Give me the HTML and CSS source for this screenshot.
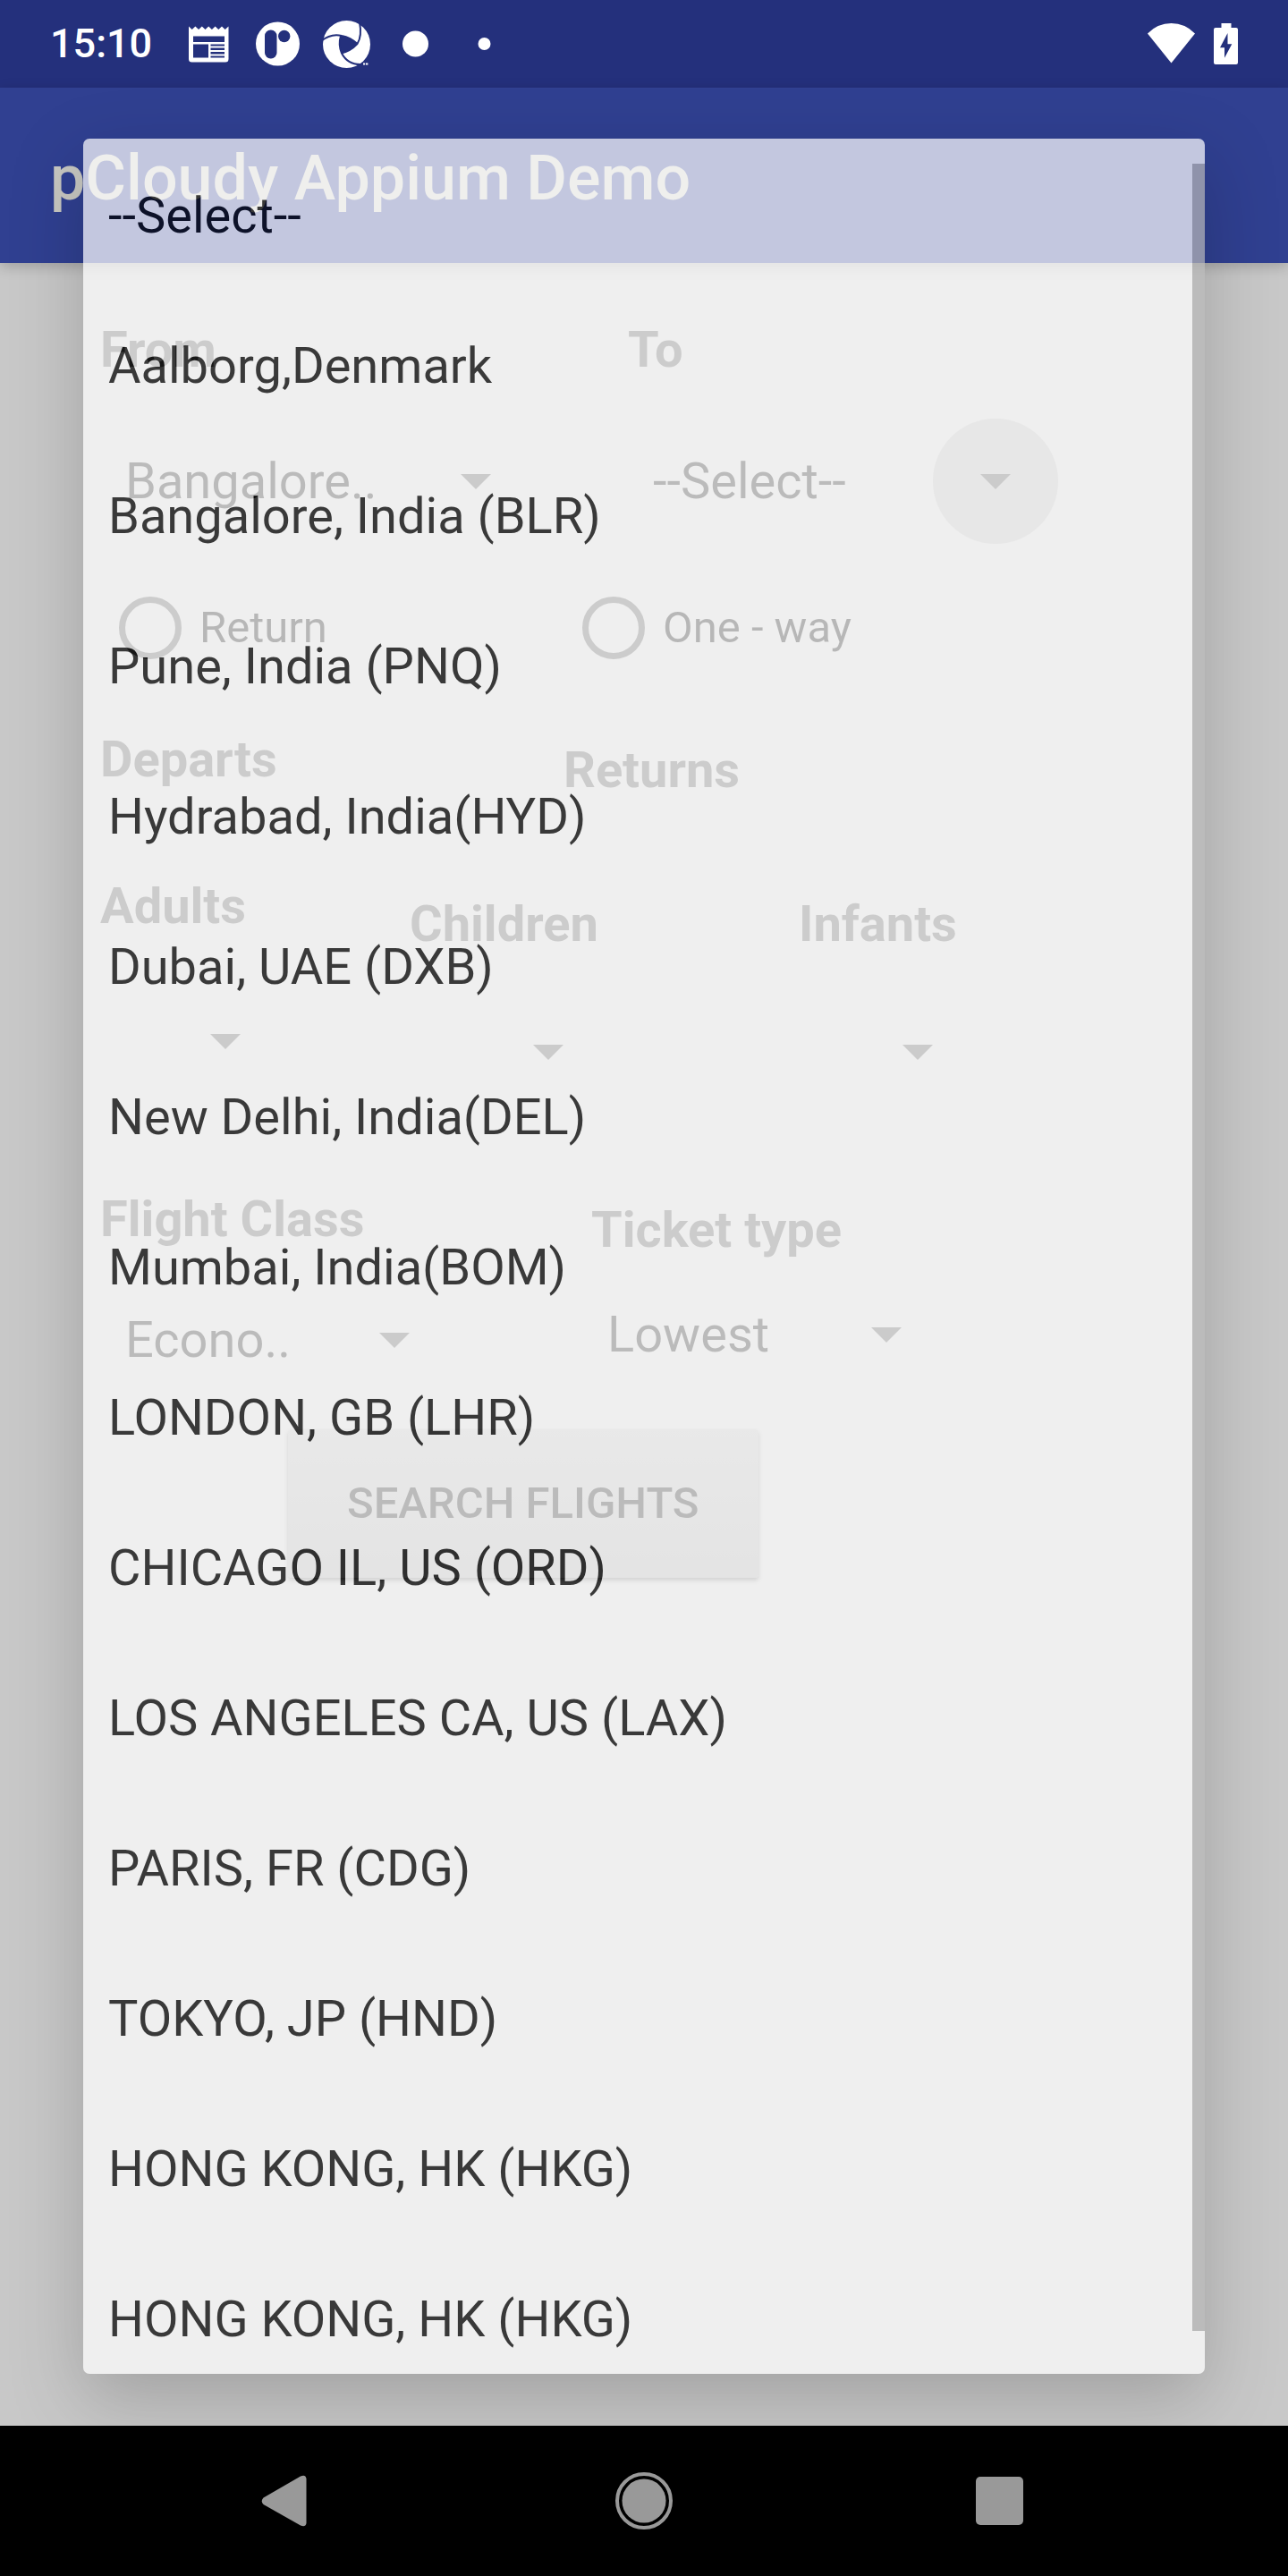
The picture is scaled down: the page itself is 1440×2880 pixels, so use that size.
FILE: index.html
```html
<!DOCTYPE html>
<html lang="en">
<head>
  <meta charset="utf-8">
  <meta name="viewport" content="width=device-width, initial-scale=1">
  <title>pCloudy Appium Demo</title>
  <link rel="stylesheet" href="styles.css">
</head>
<body>
  <div class="screen">
    <header class="status">
      <time class="clock">15:10</time>
      <div class="notices">
        <svg viewBox="0 0 77 78" class="notice" aria-hidden="true">
          <path class="lit" d="M16 19.500l3.700 3.500 3.700-3.500 3.700 3.500 3.700-3.500 3.700 3.500 3.700-3.500 3.700 3.500 3.700-3.500 3.700 3.500 3.700-3.500 3.700 3.500 3.800-3.500V56a3.500 3.500 0 0 1-3.500 3.500h-37.500A3.500 3.500 0 0 1 16 56z"/>
          <path class="cut" d="M21 30.500h35v6.500H21zM21 39.500h17v15H21zM40.500 39.500H56v2H40.500zM40.500 43.500H56v2.500H40.500zM40.500 48H56v2.500H40.500zM40.500 52.500H56v2H40.500z"/>
        </svg>
        <svg viewBox="0 0 77 78" class="notice" aria-hidden="true">
          <circle class="lit" cx="38.500" cy="39" r="24.500"/>
          <rect class="cut" x="24" y="23.500" width="13.500" height="32" rx="6.500"/>
          <circle class="cut" cx="45.700" cy="30.500" r="6.700"/>
        </svg>
        <svg viewBox="0 0 77 78" class="notice" aria-hidden="true">
          <circle class="lit" cx="38.500" cy="39.500" r="26.500"/>
          <path class="cut" d="M32 30Q43 32 50.500 39 43 47 32.500 49.500 29 40 32 30z"/>
          <path class="slit" d="M10 36Q21 27 33 30 43 32 50.500 39M53 15Q56 30 50.500 39 43 47 32.500 49.500M56 62Q40 63 33 49.500 29 40 32 30"/>
          <path class="lit" d="M57 60.500h2.200v2H57zM60 60.500h2.400v2H60z"/>
        </svg>
        <svg viewBox="0 0 77 78" class="notice" aria-hidden="true"><circle class="lit" cx="38.500" cy="39" r="14.500"/></svg>
        <svg viewBox="0 0 77 78" class="notice" aria-hidden="true"><circle class="lit" cx="38.500" cy="39" r="7"/></svg>
      </div>
      <div class="signals">
        <svg viewBox="0 0 53 46" class="wifi" aria-hidden="true"><path class="lit" d="M0 11.500Q11 0 26.500 0T53 11.500L26.500 44.500z"/></svg>
        <svg viewBox="0 0 27 46" class="battery" aria-hidden="true">
          <path class="lit" d="M8.500 0h11v5H25a2 2 0 0 1 2 2v37a2 2 0 0 1-2 2H2a2 2 0 0 1-2-2V7a2 2 0 0 1 2-2h6.500z"/>
          <path class="cut" d="M15.500 11L7 27.300h5v11.500l8.300-15.500h-4.800z"/>
        </svg>
      </div>
    </header>

    <div class="appbar"><h1 class="title">pCloudy Appium Demo</h1></div>

    <form class="form">
      <div class="row row--trip">
        <div class="field">
          <label class="label" for="from">From</label>
          <div class="spinner spinner--origin">
            <select id="from" class="select"><option>Bangalore..</option></select>
            <svg viewBox="0 0 84 84" class="arrow" aria-hidden="true"><path d="M25 34h34L42 51z"/></svg>
          </div>
        </div>
        <div class="field">
          <label class="label" for="to">To</label>
          <div class="spinner spinner--target">
            <select id="to" class="select"><option>--Select--</option></select>
            <svg viewBox="0 0 84 84" class="arrow" aria-hidden="true"><path d="M25 34h34L42 51z"/></svg>
          </div>
        </div>
      </div>

      <div class="row row--kind">
        <label class="choice"><input type="radio" name="kind" class="radio">Return</label>
        <label class="choice"><input type="radio" name="kind" class="radio">One - way</label>
      </div>

      <div class="row row--dates">
        <h2 class="label">Departs</h2>
        <h2 class="label label--low">Returns</h2>
      </div>

      <div class="row row--people">
        <div class="field field--loose">
          <label class="label" for="adults">Adults</label>
          <div class="spinner spinner--adults">
            <select id="adults" class="select"></select>
            <svg viewBox="0 0 84 84" class="arrow" aria-hidden="true"><path d="M25 34h34L42 51z"/></svg>
          </div>
        </div>
        <div class="field field--low">
          <label class="label" for="children">Children</label>
          <div class="spinner spinner--children">
            <select id="children" class="select"></select>
            <svg viewBox="0 0 84 84" class="arrow" aria-hidden="true"><path d="M25 34h34L42 51z"/></svg>
          </div>
        </div>
        <div class="field field--low">
          <label class="label" for="infants">Infants</label>
          <div class="spinner spinner--infants">
            <select id="infants" class="select"></select>
            <svg viewBox="0 0 84 84" class="arrow" aria-hidden="true"><path d="M25 34h34L42 51z"/></svg>
          </div>
        </div>
      </div>

      <div class="row row--class">
        <div class="field field--snug">
          <label class="label" for="class">Flight Class</label>
          <div class="spinner spinner--class">
            <select id="class" class="select"><option>Econo..</option></select>
            <svg viewBox="0 0 84 84" class="arrow" aria-hidden="true"><path d="M25 34h34L42 51z"/></svg>
          </div>
        </div>
        <div class="field field--tight">
          <label class="label label--low label--inset" for="ticket">Ticket type</label>
          <div class="spinner spinner--ticket">
            <select id="ticket" class="select"><option>Lowest</option></select>
            <svg viewBox="0 0 84 84" class="arrow" aria-hidden="true"><path d="M25 34h34L42 51z"/></svg>
          </div>
        </div>
      </div>

      <button type="button" class="search">SEARCH FLIGHTS</button>
    </form>

    <nav class="navbar" aria-label="System">
      <button type="button" class="key" aria-label="Back">
        <svg viewBox="0 0 84 84" class="glyph" aria-hidden="true"><path class="keyfill" d="M14.500 38.500L56 14.500Q61.500 12 62.500 17V67Q61.500 72 56 69.500L14.500 46Q11 42.500 14.500 38.500z"/></svg>
      </button>
      <button type="button" class="key" aria-label="Home">
        <svg viewBox="0 0 84 84" class="glyph" aria-hidden="true"><circle class="keyline" cx="42" cy="42" r="30"/><circle class="keyfill" cx="42" cy="42" r="24.500"/></svg>
      </button>
      <button type="button" class="key" aria-label="Recent apps">
        <svg viewBox="0 0 84 84" class="glyph" aria-hidden="true"><rect class="keyfill" x="15" y="15" width="53" height="54" rx="5"/></svg>
      </button>
    </nav>

    <div class="popup">
      <ul class="options" role="listbox" aria-label="To">
        <li class="option" role="option" aria-selected="true">--Select--</li>
        <li class="option" role="option">Aalborg,Denmark</li>
        <li class="option" role="option">Bangalore, India (BLR)</li>
        <li class="option" role="option">Pune, India (PNQ)</li>
        <li class="option" role="option">Hydrabad, India(HYD)</li>
        <li class="option" role="option">Dubai, UAE (DXB)</li>
        <li class="option" role="option">New Delhi, India(DEL)</li>
        <li class="option" role="option">Mumbai, India(BOM)</li>
        <li class="option" role="option">LONDON, GB (LHR)</li>
        <li class="option" role="option">CHICAGO IL, US (ORD)</li>
        <li class="option" role="option">LOS ANGELES CA, US (LAX)</li>
        <li class="option" role="option">PARIS, FR (CDG)</li>
        <li class="option" role="option">TOKYO, JP (HND)</li>
        <li class="option" role="option">HONG KONG, HK (HKG)</li>
        <li class="option" role="option">HONG KONG, HK (HKG)</li>
      </ul>
      <div class="scrollbar"></div>
    </div>
  </div>
</body>
</html>
```

FILE: styles.css
```css
* {
  box-sizing: border-box;
}

body {
  margin: 0;
  background: #c8c8c8;
  font-family: Roboto, "Liberation Sans", sans-serif;
  font-size: 56px;
  line-height: 66px;
}

.screen {
  position: relative;
  display: flex;
  flex-direction: column;
  min-height: 100vh;
  overflow: hidden;
}

/* Status bar */
.status {
  display: flex;
  align-items: center;
  height: 98px;
  padding: 0 56px;
  background: #24307c;
  color: #fff;
}

.clock {
  width: 139px;
  font-size: 45px;
  font-weight: 500;
}

.notices {
  display: flex;
  flex: 1;
}

.notice {
  width: 77px;
  height: 78px;
}

.signals {
  display: flex;
  align-items: center;
  gap: 21px;
}

.wifi {
  width: 53px;
  height: 46px;
}

.battery {
  width: 27px;
  height: 46px;
}

.lit {
  fill: #fff;
}

.cut {
  fill: #24307c;
}

.slit {
  fill: none;
  stroke: #24307c;
  stroke-width: 2;
}

/* App bar */
.appbar {
  display: flex;
  align-items: center;
  height: 196px;
  padding: 6px 56px 0;
  background: #304091;
  box-shadow: 0 4px 14px rgba(0, 0, 0, 0.2);
}

.title {
  margin: 0;
  color: #c8c8c2;
  font-size: 70px;
  font-weight: 500;
  line-height: 84px;
}

/* Search form */
.form {
  flex: 1;
  padding: 64px 112px 0;
}

.row {
  display: grid;
  align-items: start;
}

.row--trip {
  grid-template-columns: minmax(0, 590fr) minmax(0, 626fr);
}

.row--kind {
  grid-template-columns: minmax(0, 518fr) minmax(0, 698fr);
  margin-top: 80px;
}

.row--dates {
  grid-template-columns: minmax(0, 518fr) minmax(0, 698fr);
  margin-top: 72px;
}

.row--people {
  grid-template-columns: minmax(0, 346fr) minmax(0, 435fr) minmax(0, 435fr);
  margin-top: 86px;
}

.row--class {
  grid-template-columns: minmax(0, 539fr) minmax(0, 677fr);
  margin-top: 112px;
}

.field {
  display: flex;
  flex-direction: column;
  gap: 72px;
}

.field--loose {
  gap: 76px;
}

.field--snug {
  gap: 60px;
}

.field--tight {
  gap: 42px;
}

.field--low {
  gap: 68px;
  padding-top: 20px;
}

.label {
  margin: 0;
  color: #505050;
  font-size: 56px;
  font-weight: 700;
  line-height: 66px;
}

.label--low {
  padding-top: 12px;
}

.label--inset {
  padding-left: 10px;
}

.spinner {
  display: grid;
  grid-template-columns: 1fr 84px;
  align-items: center;
  max-width: 100%;
  height: 84px;
}

.spinner--origin {
  width: 462px;
}

.spinner--target {
  width: 453px;
}

.spinner--class {
  width: 371px;
}

.spinner--ticket {
  width: 382px;
}

.spinner--adults {
  width: 182px;
}

.spinner--children {
  width: 197px;
}

.spinner--infants {
  width: 175px;
}

.select {
  grid-area: 1 / 1 / 2 / 3;
  width: 100%;
  height: 84px;
  padding: 0 84px 0 28px;
  border: 0;
  background: transparent;
  color: #141414;
  font: inherit;
  appearance: none;
}

.arrow {
  grid-area: 1 / 2 / 2 / 3;
  width: 84px;
  height: 84px;
  fill: #4c4c4c;
  pointer-events: none;
}

.spinner--target .arrow {
  border-radius: 50%;
  background: #adadad;
  box-shadow: 0 0 0 28px #adadad;
}

.choice {
  display: flex;
  align-items: center;
  gap: 20px;
  height: 84px;
  padding-left: 21px;
  color: #080808;
  font-size: 49px;
  line-height: 58px;
}

.radio {
  width: 70px;
  height: 70px;
  margin: 0;
  border: 7px solid #505050;
  border-radius: 50%;
  appearance: none;
}

.search {
  display: block;
  margin: 58px 0 0 210px;
  padding: 54px 66px;
  border: 0;
  border-radius: 4px;
  background: linear-gradient(#b3b3b3, #a3a3a3);
  box-shadow: 0 3px 4px rgba(0, 0, 0, 0.45);
  color: #141414;
  font-family: inherit;
  font-size: 49px;
  font-weight: 500;
  line-height: 58px;
}

/* System navigation */
.navbar {
  position: relative;
  z-index: 2;
  display: flex;
  justify-content: center;
  height: 168px;
  background: #000;
}

.key {
  display: flex;
  align-items: center;
  justify-content: center;
  flex: 0 1 398px;
  padding: 0;
  border: 0;
  background: transparent;
}

.glyph {
  width: 84px;
  height: 84px;
}

.keyfill {
  fill: #999;
}

.keyline {
  fill: none;
  stroke: #999;
  stroke-width: 4;
}

.popup {
  position: absolute;
  top: 155px;
  right: 93px;
  bottom: 226px;
  left: 93px;
  z-index: 1;
  overflow: hidden;
  border-radius: 7px;
  background: #fff;
  box-shadow: 0 28px 80px rgba(0, 0, 0, 0.27);
  opacity: 0.71;
}

.options {
  margin: 0;
  padding: 2px 0 0;
  list-style: none;
}

.option {
  padding: 0 28px;
  color: #000;
  line-height: 168px;
}

.scrollbar {
  position: absolute;
  top: 28px;
  right: 0;
  bottom: 48px;
  width: 14px;
  background: #b6b6b6;
}
```
